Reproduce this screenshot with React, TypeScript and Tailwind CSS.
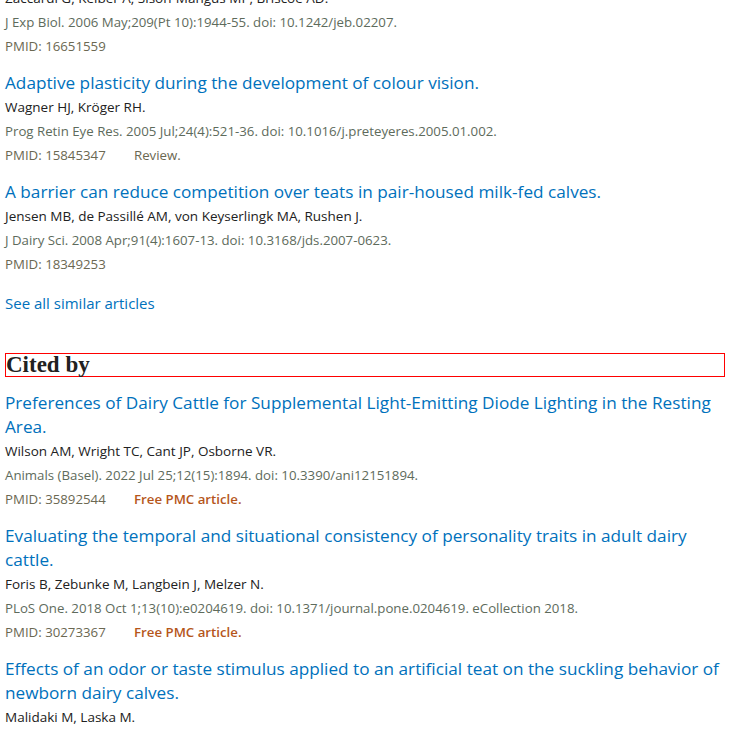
type Article = {
  title: string;
  authors: string;
  citation: string;
  pmid: string;
  note?: string;
  pmc?: boolean;
};

const similar: Article[] = [
  {
    title: 'Adaptive plasticity during the development of colour vision.',
    authors: 'Wagner HJ, Kröger RH.',
    citation: 'Prog Retin Eye Res. 2005 Jul;24(4):521-36. doi: 10.1016/j.preteyeres.2005.01.002.',
    pmid: '15845347',
    note: 'Review.',
  },
  {
    title: 'A barrier can reduce competition over teats in pair-housed milk-fed calves.',
    authors: 'Jensen MB, de Passillé AM, von Keyserlingk MA, Rushen J.',
    citation: 'J Dairy Sci. 2008 Apr;91(4):1607-13. doi: 10.3168/jds.2007-0623.',
    pmid: '18349253',
  },
];

const citedBy: Article[] = [
  {
    title: 'Preferences of Dairy Cattle for Supplemental Light-Emitting Diode Lighting in the Resting Area.',
    authors: 'Wilson AM, Wright TC, Cant JP, Osborne VR.',
    citation: 'Animals (Basel). 2022 Jul 25;12(15):1894. doi: 10.3390/ani12151894.',
    pmid: '35892544',
    pmc: true,
  },
  {
    title: 'Evaluating the temporal and situational consistency of personality traits in adult dairy cattle.',
    authors: 'Foris B, Zebunke M, Langbein J, Melzer N.',
    citation: 'PLoS One. 2018 Oct 1;13(10):e0204619. doi: 10.1371/journal.pone.0204619. eCollection 2018.',
    pmid: '30273367',
    pmc: true,
  },
  {
    title: 'Effects of an odor or taste stimulus applied to an artificial teat on the suckling behavior of newborn dairy calves.',
    authors: 'Malidaki M, Laska M.',
    citation: '',
    pmid: '',
  },
];

const ArticleItem = ({ a }: { a: Article }) => (
  <div className="mb-[13px]">
    <a href="#" className="block text-[17.2px] leading-[24px] text-[#0071bc]">
      {a.title}
    </a>
    <div className="text-[13.5px] leading-[24px] text-[#212121]">{a.authors}</div>
    {a.citation && (
      <div className="text-[13.25px] leading-[24px] text-[#5e6b5c]">{a.citation}</div>
    )}
    {a.pmid && (
      <div className="text-[13.25px] leading-[24px] text-[#6b6852]">
        <span className="inline-block w-[129px]">PMID: {a.pmid}</span>
        {a.note && <span>{a.note}</span>}
        {a.pmc && <span className="font-semibold text-[#b5561b]">Free PMC article.</span>}
      </div>
    )}
  </div>
);

export default function App() {
  return (
    <div
      className="h-[730px] overflow-hidden bg-white px-[5px]"
      style={{ fontFamily: "'Open Sans', 'Noto Sans', sans-serif" }}
    >
      <div className="-mt-[14px]">
        <div className="mb-[13px]">
          <div className="text-[13.5px] leading-[24px] text-[#212121]">
            Zaccardi G, Kelber A, Sison-Mangus MP, Briscoe AD.
          </div>
          <div className="text-[13.25px] leading-[24px] text-[#5e6b5c]">
            J Exp Biol. 2006 May;209(Pt 10):1944-55. doi: 10.1242/jeb.02207.
          </div>
          <div className="text-[13.25px] leading-[24px] text-[#6b6852]">PMID: 16651559</div>
        </div>

        {similar.map((a) => (
          <ArticleItem key={a.pmid} a={a} />
        ))}

        <div className="mt-[15px] mb-[38px]">
          <a href="#" className="text-[15px] leading-[24px] text-[#0071bc]">
            See all similar articles
          </a>
        </div>

        <h2
          className="mb-[14px] h-[24px] border border-[#f00] text-[23px] font-bold leading-[22px] text-[#212121]"
          style={{ fontFamily: "'Liberation Serif', serif" }}
        >
          Cited by
        </h2>

        {citedBy.map((a) => (
          <ArticleItem key={a.title} a={a} />
        ))}
      </div>
    </div>
  );
}
